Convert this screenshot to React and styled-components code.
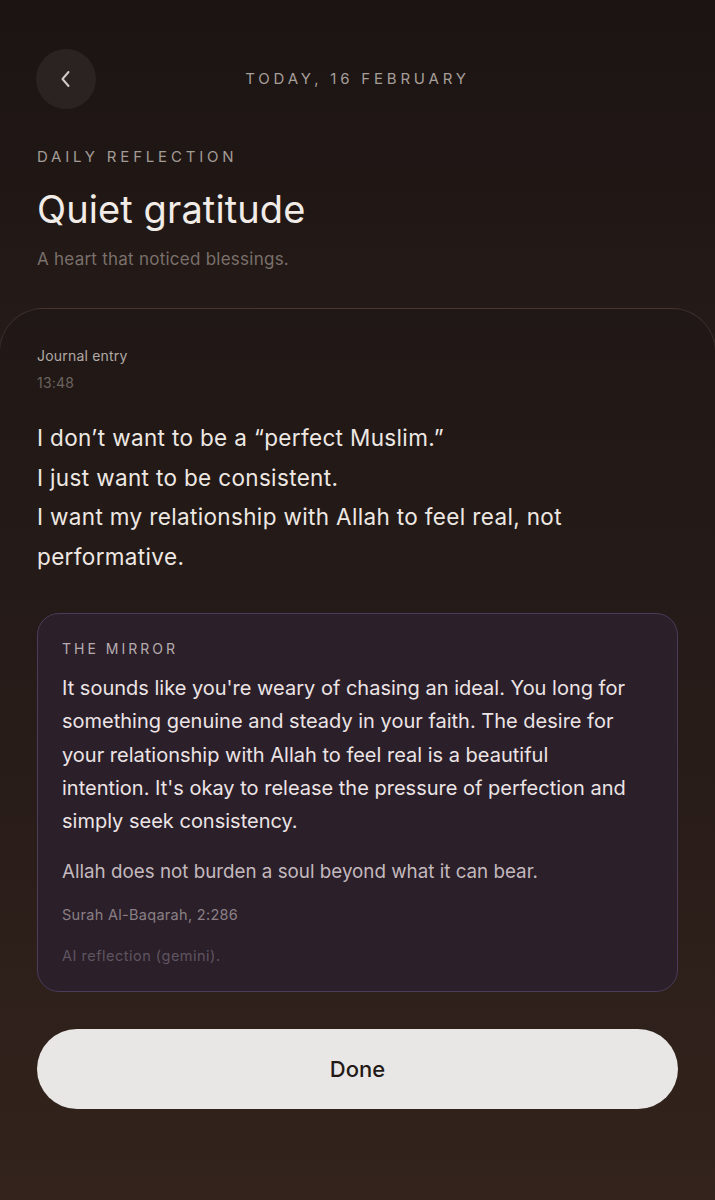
import React from 'react'
import styled, { createGlobalStyle } from 'styled-components'

const GlobalStyle = createGlobalStyle`
    html, body {
        margin: 0;
        padding: 0;
        background: #1b1413;
    }
    body {
        font-family: Inter, "Noto Sans", "Liberation Sans", sans-serif;
        -webkit-font-smoothing: antialiased;
    }
`

const Page = styled.div`
    width: 715px;
    min-height: 1200px;
    overflow: hidden;
    background: linear-gradient(180deg, #1b1413 0%, #241a17 26%, #2a1e1a 55%, #33231c 100%);
    display: flex;
    flex-direction: column;
`

const Header = styled.div`
    display: grid;
    grid-template-columns: 60px 1fr 60px;
    align-items: center;
    padding: 49px 36px 0;
`

const BackButton = styled.button`
    width: 60px;
    height: 60px;
    border-radius: 50%;
    border: none;
    background: #2b2322;
    display: flex;
    align-items: center;
    justify-content: center;
    padding: 0;
    cursor: pointer;
`

const DateLabel = styled.div`
    text-align: center;
    font-size: 15px;
    line-height: 20px;
    letter-spacing: 3.8px;
    color: #a69e99;
`

const Intro = styled.div`
    padding: 0 37px;
    display: flex;
    flex-direction: column;
`

const Eyebrow = styled.div`
    margin-top: 38px;
    font-size: 15px;
    line-height: 20px;
    letter-spacing: 3.8px;
    color: #a39b96;
`

const Title = styled.h1`
    margin: 19px 0 0;
    font-size: 38px;
    line-height: 46px;
    font-weight: 400;
    letter-spacing: 0.1px;
    color: #f1ece7;
`

const Subtitle = styled.p`
    margin: 15px 0 0;
    font-size: 17px;
    line-height: 24px;
    letter-spacing: 0.25px;
    color: #7a706c;
`

const Sheet = styled.div`
    margin: 37px -1px 0;
    flex: 1;
    border: 1px solid rgba(255, 236, 225, 0.1);
    border-bottom: none;
    border-radius: 44px 44px 0 0;
    background: linear-gradient(180deg, #201816 0%, #261b18 40%, #33231c 100%);
    padding: 37px 37px 91px;
    display: flex;
    flex-direction: column;
`

const EntryLabel = styled.div`
    font-size: 14px;
    line-height: 20px;
    letter-spacing: 0.2px;
    color: #b1a9a4;
`

const EntryTime = styled.div`
    margin-top: 7px;
    font-size: 14px;
    line-height: 20px;
    letter-spacing: 0.2px;
    color: #6b625e;
`

const EntryText = styled.div`
    margin-top: 25px;
    font-size: 22.5px;
    line-height: 39.5px;
    letter-spacing: 0.35px;
    color: #eee8e3;
`

const Mirror = styled.div`
    margin-top: 37px;
    border: 1px solid #4c3b59;
    border-radius: 22px;
    background: #2b1f2a;
    padding: 25px 38px 25px 24px;
    display: flex;
    flex-direction: column;
`

const MirrorLabel = styled.div`
    font-size: 14px;
    line-height: 20px;
    letter-spacing: 3px;
    color: #b6acaf;
`

const MirrorText = styled.p`
    margin: 13px 0 0;
    font-size: 20px;
    line-height: 33.3px;
    color: #ece4e5;
`

const Verse = styled.p`
    margin: 20px 0 0;
    font-size: 18.8px;
    line-height: 28px;
    color: #c3b9bd;
`

const Meta = styled.div`
    margin-top: ${props => props.gap}px;
    font-size: 14.5px;
    line-height: 20px;
    letter-spacing: ${props => props.spacing}px;
    color: ${props => props.tone};
`

const DoneButton = styled.button`
    margin-top: 37px;
    height: 80px;
    width: 100%;
    border: none;
    border-radius: 40px;
    background: #e9e7e5;
    color: #231a17;
    font-family: inherit;
    font-size: 22px;
    font-weight: 500;
    cursor: pointer;
`

const Chevron = () => (
    <svg width="16" height="20" viewBox="0 0 16 20" fill="none">
        <path d="M10.5 3 L4.5 10 L10.5 17" stroke="#d2cac6" strokeWidth="2" strokeLinecap="round" strokeLinejoin="round" />
    </svg>
)

const App = () => (
    <>
        <GlobalStyle />
        <Page>
            <Header>
                <BackButton aria-label='back'>
                    <Chevron />
                </BackButton>
                <DateLabel>TODAY, 16 FEBRUARY</DateLabel>
                <span />
            </Header>
            <Intro>
                <Eyebrow>DAILY REFLECTION</Eyebrow>
                <Title>Quiet gratitude</Title>
                <Subtitle>A heart that noticed blessings.</Subtitle>
            </Intro>
            <Sheet>
                <EntryLabel>Journal entry</EntryLabel>
                <EntryTime>13:48</EntryTime>
                <EntryText>
                    I don’t want to be a “perfect Muslim.”<br />
                    I just want to be consistent.<br />
                    I want my relationship with Allah to feel real, not performative.
                </EntryText>
                <Mirror>
                    <MirrorLabel>THE MIRROR</MirrorLabel>
                    <MirrorText>
                        It sounds like you're weary of chasing an ideal. You long for something genuine and steady in your faith. The desire for your relationship with Allah to feel real is a beautiful intention. It's okay to release the pressure of perfection and simply seek consistency.
                    </MirrorText>
                    <Verse>Allah does not burden a soul beyond what it can bear.</Verse>
                    <Meta gap={19} spacing={0.3} tone='#8a7f84'>Surah Al-Baqarah, 2:286</Meta>
                    <Meta gap={21} spacing={0.5} tone='#5f5560'>AI reflection (gemini).</Meta>
                </Mirror>
                <DoneButton>Done</DoneButton>
            </Sheet>
        </Page>
    </>
)

export default App
